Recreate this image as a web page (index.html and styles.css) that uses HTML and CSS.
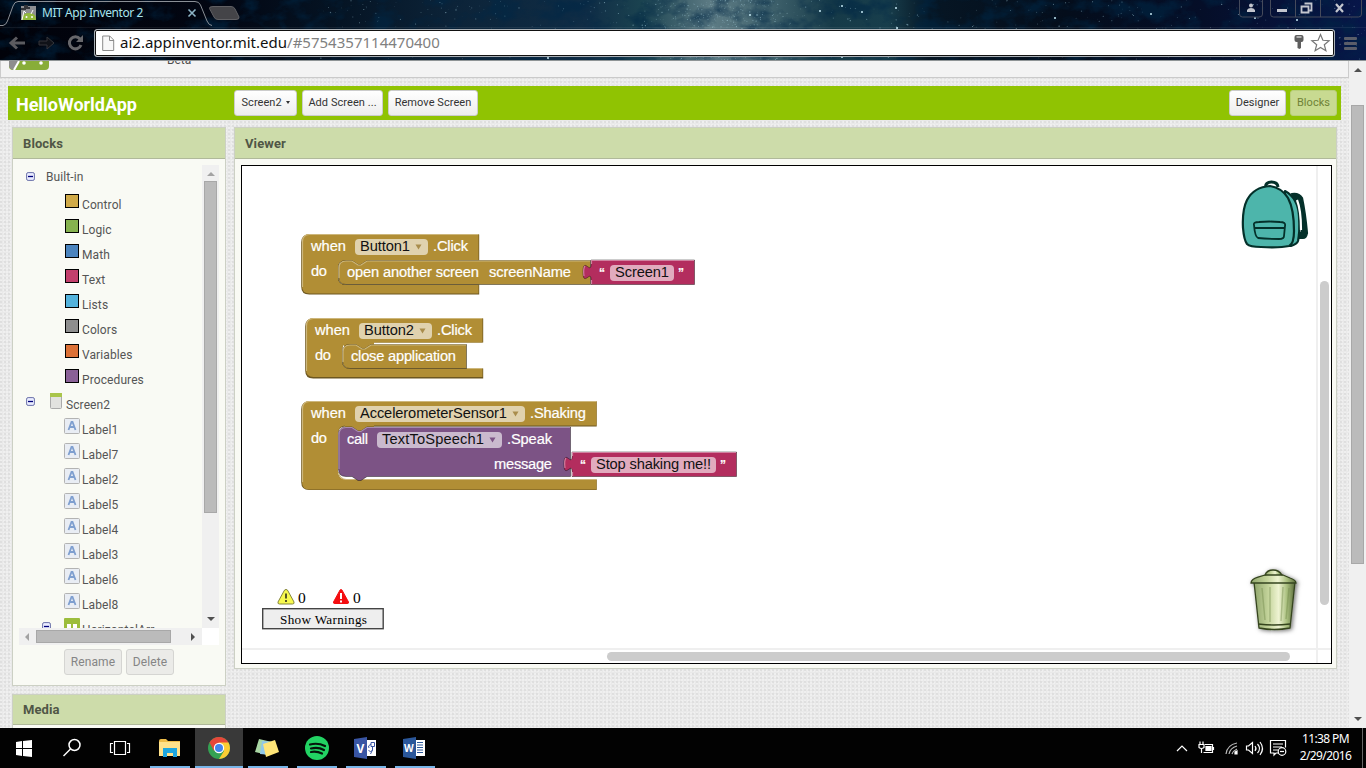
FILE: index.html
```html
<!DOCTYPE html>
<html lang="en">
<head>
<meta charset="utf-8">
<title>MIT App Inventor 2</title>
<link rel="stylesheet" href="styles.css">
</head>
<body>
<div class="desktop">
  <header class="chrome">
    <svg class="sky" id="sky" width="1366" height="60" viewBox="0 0 1366 60">
      <defs>
        <linearGradient id="night"><stop offset="0" stop-color="#01020a"/><stop offset=".16" stop-color="#020612"/><stop offset=".25" stop-color="#051424"/><stop offset=".33" stop-color="#0c2338"/><stop offset=".43" stop-color="#102d46"/><stop offset=".47" stop-color="#1b4350"/><stop offset=".52" stop-color="#5d7b84"/><stop offset=".56" stop-color="#446670"/><stop offset=".61" stop-color="#163a48"/><stop offset=".65" stop-color="#183e4c"/><stop offset=".68" stop-color="#061624"/><stop offset=".78" stop-color="#040d1b"/><stop offset=".88" stop-color="#050e28"/><stop offset="1" stop-color="#07164a"/></linearGradient>
        <filter id="cloud" x="0" y="0" width="100%" height="100%"><feTurbulence type="fractalNoise" baseFrequency=".035 .05" numOctaves="5" seed="8"/><feColorMatrix values="0 0 0 0 0  0 0 0 0 0.02  0 0 0 0 0.06  3.4 0 0 0 -1.5"/></filter>
      </defs>
      <rect width="1366" height="60" fill="url(#night)"/>
      <rect width="1366" height="60" filter="url(#cloud)" opacity=".6"/>
      <g id="stars"></g>
    </svg>
    <div class="tabs">
      <svg class="tabshape" width="240" height="27" viewBox="0 0 240 27">
        <path d="M0 25.500H3Q6 25 7.500 21L13 6Q14.500 1.500 18 1.500H195Q199 1.500 200.500 5L207 21Q209 25.500 212 25.500" fill="none" stroke="#8a8f96"/>
        <path d="M213 6.500H231Q234 6.500 235 9L239 17Q239.500 19.500 236 19.500H218Q215 19.500 214 17L209.500 8.500Q209 6.500 213 6.500Z" fill="#444448" stroke="#606064"/>
        <path d="M21 6H36V20H21Z" fill="#8e8e91"/><path d="M21 9h4v-4M27 5v3h3" stroke="#33353a" stroke-width="2" fill="none"/>
        <path d="M22 20v-2q1-5 7-5t7 5v2Z" fill="#92b93d"/><path d="m22 20 2-9 2 2M33 10l-2 4" stroke="#fff" fill="none"/><circle cx="26.500" cy="17" r="1" fill="#fff"/><circle cx="32" cy="17" r="1" fill="#fff"/>
        <path d="m188.500 9.500 7 7m0-7-7 7" stroke="#8eb5c7" stroke-width="1.600"/>
      </svg>
      <span class="tabtitle">MIT App Inventor 2</span>
      <svg class="winctl" width="126" height="19" viewBox="0 0 126 19">
        <g fill="none" stroke="#454a5b"><path d="M.500 0V14q0 3 3 3H20.500q3 0 3-3V0M31.500 0V14q0 3 3 3H119.500q3 0 3-3V0M56.500 0V17M81.500 0V17"/></g>
        <g fill="#c3c6ce"><circle cx="12" cy="5.500" r="2"/><path d="M8 12v-2q1-2 4-2t4 2v2ZM38 9h10v3H38Z"/></g>
        <path d="M65.500 3.500h7v7h-2M62.500 6.500h7v6h-7Z" fill="none" stroke="#c3c6ce" stroke-width="1.800"/><path d="m97 4 7 8m0-8-7 8" stroke="#c3c6ce" stroke-width="2.200"/>
      </svg>
    </div>
    <div class="toolbar">
      <svg class="nav" width="94" height="32" viewBox="0 0 94 32"><path d="m17 9.500-6 5.500 6 5.500M11 15h14" fill="none" stroke="#5b5b60" stroke-width="3"/><path d="M39 13h8v-4l7 6-7 6v-4h-8Z" fill="#101218" stroke="#34353a"/><path d="M80 11a6 6 0 1 0 1 6" fill="none" stroke="#67676b" stroke-width="3"/><path d="M83 7v7h-7Z" fill="#67676b"/></svg>
      <div class="url">
        <svg width="13" height="17" viewBox="0 0 13 17"><path d="M.700 1h7l4 4v10.500H.700ZM7.500 1v4.500H12" fill="#f8f8f8" stroke="#8b8b8b"/></svg>
        <span>ai2.appinventor.mit.edu<i>/#5754357114470400</i></span>
        <svg class="urlicons" width="42" height="22" viewBox="0 0 42 22"><path d="M4.500 5q0-2 2-2h5q2 0 2 2v3q0 2-2 2H11v6l-1.500 1L7.500 16V10h-1Q4.500 10 4.500 8Z" fill="#5e5e5e"/><path d="M6.500 5h5" stroke="#fff"/><path d="m30.500 2.500 2.400 5.800 6.200.4-4.800 4 1.600 6.100-5.400-3.400-5.400 3.400 1.600-6.100-4.800-4 6.200-.4Z" fill="#fff" stroke="#777" stroke-width="1.200"/></svg>
      </div>
      <div class="burger"><b></b><b></b><b></b></div>
    </div>
  </header>

  <main class="browser">
    <div class="page">
      <div class="masthead">
        <svg width="42" height="9" viewBox="0 0 42 9"><path d="M1 0h40v5q0 4-4 4H5Q1 9 1 5Z" fill="#88ad38"/><path d="M1 0h10L5 9Q1 8 1 4Z" fill="#8e8e8e"/><path d="M11 0 6 9" stroke="#fff" stroke-width="2"/><circle cx="16" cy="2" r="1.800" fill="#fff"/><circle cx="33" cy="2" r="1.800" fill="#fff"/></svg>
        <span class="beta">Beta</span>
      </div>
      <div class="greenbar">
        <h1>HelloWorldApp</h1>
        <div class="btns"><button class="w63">Screen2 <em></em></button><button class="w81">Add Screen ...</button><button class="w90">Remove Screen</button></div>
        <div class="btns right"><button class="w57">Designer</button><button class="w47 on">Blocks</button></div>
      </div>
      <div class="columns">
        <aside>
          <section class="panel blocks">
            <h2>Blocks</h2>
            <div class="scroller">
              <div class="tree" id="tree"></div>
              <div class="vbar"><u class="up dim"></u><b></b><u class="down"></u></div>
              <div class="hbar"><u class="lt dim"></u><b></b><u class="rt"></u></div>
              <div class="corner"></div>
            </div>
            <div class="actions"><button class="w58">Rename</button><button class="w48">Delete</button></div>
          </section>
          <section class="panel media"><h2>Media</h2></section>
        </aside>
        <section class="panel viewer">
          <h2>Viewer</h2>
          <svg class="canvas" viewBox="242 166 1089 497" width="1089" height="497">
            <defs>
              <linearGradient id="can"><stop offset="0" stop-color="#8fa56b"/><stop offset=".35" stop-color="#c4d49b"/><stop offset=".6" stop-color="#eef3d2"/><stop offset=".8" stop-color="#a9bf7e"/><stop offset="1" stop-color="#596b3b"/></linearGradient>
              <filter id="soft" x="-30%" y="-30%" width="160%" height="160%"><feDropShadow dx="1.500" dy="1" stdDeviation="2" flood-opacity=".55"/></filter>
            </defs>
            <path d="M1317 166V663M242 649H1331" stroke="#efefef" stroke-width="2"/>
            <rect x="1320" y="281" width="9" height="324" rx="4.500" fill="#ccc"/><rect x="607" y="652" width="683" height="9" rx="4.500" fill="#ccc"/>

            <!-- Button1.Click -->
            <path class="dk" d="M310 235H480V261H346q-7 0-7 7v9q0 8 7 8H480V295H310q-8 0-8-8V243q0-8 8-8Z"/>
            <path class="gold" d="M309.500 234H478.500V260H346q-8 0-8 8v9q0 8 8 8H478.500V293.500H309.500q-7.500 0-7.500-7.500V242q0-8 7.500-8Z"/>
            <path class="hl" d="M302.500 287V242q0-7.500 7-7.500H478"/>
            <path class="gold" d="M340 259H370V266H340Z"/>
            <path class="gold edge" d="M338.500 277V268q0-7.500 7.500-7.500h6l6 4h3l6-4H590.500V284.500H346q-7.500 0-7.500-7.500Z"/>
            <path class="hl" d="M339 278V268q0-7 7-7h6l6 4h3l6-4H590"/>
            <path class="pink edge" d="M591 260H694.500V284.500H591V279.500c0-10-8 8-8-7.500s8 2.500 8-7.500Z"/>
            <path class="hlp" d="M591.500 284V280M591.500 264V260.500H694M584 276q-1-8 1-10"/>
            <rect class="fld" x="355" y="239" width="73" height="16" rx="4"/><path class="tri" d="M415.500 244.500h6l-3 5Z"/>
            <rect class="fld" x="610" y="265" width="64" height="16" rx="4"/>
            <g class="bt"><text x="311" y="251" textLength="35">when</text><text x="433" y="251" textLength="35">.Click</text><text x="311" y="276" textLength="16">do</text><text x="347" y="277" textLength="132">open another screen</text><text x="489" y="277" textLength="82">screenName</text><text class="q" x="599" y="277">“</text><text class="q" x="678" y="277">”</text></g>
            <g class="ft"><text x="360" y="251" textLength="50">Button1</text><text x="615" y="277" textLength="54">Screen1</text></g>

            <!-- Button2.Click -->
            <path class="dk" d="M314 319H484V343H350q-7 0-7 7v11q0 8 7 8H484V379H314q-8 0-8-8V327q0-8 8-8Z"/>
            <path class="gold" d="M313.500 318H482.500V342.500H350q-8 0-8 8v10q0 8 8 8H482.500V377H313.500q-7.500 0-7.500-7.500V326q0-8 7.500-8Z"/>
            <path class="hl" d="M306.500 371V326q0-7.500 7-7.500H482M467 368.500H482"/>
            <path class="gold" d="M344 342H374V350H344Z"/>
            <path class="gold edge" d="M342.500 361V352q0-7.500 7.500-7.500h6l6 4h3l6-4H466.500V368.500H350q-7.500 0-7.500-7.500Z"/>
            <path class="hl" d="M343 362V352q0-7 7-7h6l6 4h3l6-4H466"/>
            <rect class="fld" x="359" y="323" width="73" height="16" rx="4"/><path class="tri" d="M419.500 328.500h6l-3 5Z"/>
            <g class="bt"><text x="315" y="335" textLength="35">when</text><text x="437" y="335" textLength="35">.Click</text><text x="315" y="360" textLength="16">do</text><text x="351" y="361" textLength="105">close application</text></g>
            <g class="ft"><text x="364" y="335" textLength="50">Button2</text></g>

            <!-- AccelerometerSensor1.Shaking -->
            <path class="dk" d="M310 402H597.500V427H346q-7 0-7 7v38q0 8 7 8H597.500V490.500H310q-8 0-8-8V410q0-8 8-8Z"/>
            <path class="gold" d="M309.500 401H596.500V425.500H346q-8 0-8 8v38q0 8 8 8H596.500V489.500H309.500q-7.500 0-7.500-7.500V409q0-8 7.500-8Z"/>
            <path class="hl" d="M302.500 482V409q0-7.500 7-7.500H596M345 479.500H596"/>
            <path class="gold" d="M345 425H374V434H345Z"/>
            <path d="M338 470q0 9 8 9h12V470Z" fill="#fff"/><path class="hl" d="M338.500 472q1 7.500 8 7.500h6"/>
            <path class="purple edge" d="M338.500 469V435q0-8 7.500-8h6l6 4h3l6-4H570.500V476.500H367l-6 4h-3l-6-4h-6q-7.500 0-7.500-7.500Z"/>
            <path class="hlv" d="M339 469V435q0-7.500 7-7.500h6l6 4h3l6-4H570"/>
            <path class="pink edge" d="M572 452H736.500V476.500H572V471.500c0-10-8 8-8-7.500s8 2.500 8-7.500Z"/>
            <path class="hlp" d="M572.500 476V472M572.500 456V452.500H736M565 468q-1-8 1-10"/>
            <rect class="fld" x="355" y="406" width="170" height="16" rx="4"/><path class="tri" d="M512.500 411.500h6l-3 5Z"/>
            <rect class="fld" x="377" y="432" width="125" height="16" rx="4"/><path class="tri v" d="M489.500 437.500h6l-3 5Z"/>
            <rect class="fld" x="591" y="457" width="125" height="16" rx="4"/>
            <g class="bt"><text x="311" y="418" textLength="35">when</text><text x="530" y="418" textLength="56">.Shaking</text><text x="311" y="443" textLength="16">do</text><text x="347" y="444" textLength="21">call</text><text x="507" y="444" textLength="45">.Speak</text><text x="494" y="469" textLength="58">message</text><text class="q" x="580" y="469">“</text><text class="q" x="720" y="469">”</text></g>
            <g class="ft"><text x="360" y="418" textLength="147">AccelerometerSensor1</text><text x="382" y="444" textLength="102">TextToSpeech1</text><text x="596" y="469" textLength="115">Stop shaking me!!</text></g>

            <!-- warnings -->
            <path d="M286 589.500q1.500 0 2 1.500l6 11q.5 2-1.500 2h-13q-2 0-1.500-2l6-11q.500-1.500 2-1.500Z" fill="#f7f94e" stroke="#85853a"/><path d="M286 593.500v5m0 1.500v2" stroke="#555522" stroke-width="2"/>
            <path d="M341 589.500q1 0 1.500 1.500l6 11q.500 1.500-1.500 1.500h-12q-2 0-1.500-1.500l6-11q.500-1.500 1.500-1.500Z" fill="#f40d10" stroke="#f40d10"/><path d="M341 593v6m0 1.500v2" stroke="#fff" stroke-width="2"/>
            <g class="serif"><text x="298" y="602.500" font-size="15.500">0</text><text x="353" y="602.500" font-size="15.500">0</text><rect x="262.700" y="608.700" width="120.500" height="20" fill="#eee" stroke="#444" stroke-width="1.400"/><text x="280" y="624" font-size="13.200" textLength="87">Show Warnings</text></g>

            <!-- backpack -->
            <g fill="#4db5ab" stroke="#04302a" stroke-width="2.200" stroke-linejoin="round">
              <path d="M1265.500 187q0-5 6-5t6.500 5" fill="none" stroke-width="3"/>
              <path d="M1285 191q13 7 14 25 1 17-1 25-1 3-7 5h-8Z"/>
              <path d="M1292 194q7-1 10 4 3 14 5 35-1 5-4 5h-4v-4l3-2q0-19-6-32Z" fill="#04302a"/><path d="M1297 200q4 10 4 30" fill="none" stroke="#fff" stroke-width="2.200"/>
              <path d="M1270 186q-16 1-23 14-5 10-4 28 1 12 4 16 3 3 14 3 19 1 28-1 5-2 5-15 0-22-6-33-6-10-18-12Z"/>
              <path d="M1254 225q-1-3 5-3 10-1 21 0 6 0 5 4l-1 10q0 3-5 3-13 0-21-1-3-1-4-13Zm0 3h31" stroke-width="1.800"/>
            </g>
            <!-- trash can -->
            <g stroke="#35441f" stroke-width="1.300" fill="url(#can)" filter="url(#soft)"><path d="M1254 582h41l-5 46q-16 3-31 0Z"/><path d="M1251 583q0-4 7-6l7-2q8-3 18 0l7 3q6 2 6 5Z"/><path d="M1265 575q2-5 8-5t9 5Z"/><path d="M1258 624q16 2 32 0" fill="none"/></g>
            <path d="M1262 588l3 32m5-33v35m13-35-2 34m8-33-3 31" stroke="#6f8748" stroke-width="1.500" opacity=".4"/>
          </svg>
        </section>
      </div>
    </div>
    <div class="pagebar"><u class="up"></u><b></b><u class="down"></u></div>
  </main>

  <footer class="taskbar">
    <div class="app"><svg viewBox="0 0 48 40"><path d="m16 14 6-1v7h-6Zm7-1 9-1v8h-9ZM16 21h6v7l-6-1Zm7 0h9v8l-9-1Z" fill="#fff"/></svg></div>
    <div class="app"><svg viewBox="0 0 48 40"><g fill="none" stroke="#fff" stroke-width="1.500"><circle cx="26.500" cy="17" r="5.500"/><path d="m22.500 21-7 7"/></g></svg></div>
    <div class="app"><svg viewBox="0 0 48 40"><path d="M18.500 13.500h11v13h-11ZM17 15.500h-2.500v9H17M31 15.500h2.500v9H31" fill="none" stroke="#fff" stroke-width="1.200"/></svg></div>
    <div class="app run"><svg viewBox="0 0 48 40"><path d="M15 13q0-2 2-2h5l2 2h12v15H15Z" fill="#efbd48"/><path d="M15 14h21v14H15Z" fill="#ffe28a"/><path d="M19 20h14v9h-4v-4h-6v4h-4Z" fill="#1ea7df"/></svg></div>
    <div class="app run active"><svg viewBox="0 0 48 40"><circle cx="24" cy="20" r="11" fill="#34a153"/><path d="M24 20 14.500 14.500A11 11 0 0 1 33.500 14.500Z" fill="#e6473a"/><path d="M24 14.500H33.500A11 11 0 0 1 24 31L29 23Z" fill="#fbcd34"/><path d="M14.500 14.500 19 23l4-8Z" fill="#e6473a"/><circle cx="24" cy="20" r="5.200" fill="#fff"/><circle cx="24" cy="20" r="4" fill="#4385ee"/></svg></div>
    <div class="app run"><svg viewBox="0 0 48 40"><path d="m16 11 13 3-4 13-13-3Z" fill="#a9d7a4"/><path d="m19 13 11 1-2 13-11-1Z" fill="#91c8e9"/><path d="m20 16 12-4 4 12-13 5Z" fill="#ffe577"/></svg></div>
    <div class="app run"><svg viewBox="0 0 48 40"><circle cx="25" cy="20" r="12" fill="#22d363"/><path d="M18 16.500q8-2 15 1.500M19 20.500q7-2 13 1.500M19 24q6-1 11 1.500" fill="none" stroke="#05150b" stroke-width="2.200" stroke-linecap="round"/></svg></div>
    <div class="app run"><svg viewBox="0 0 48 40"><path d="M25 12h10v16H25Z" fill="#fff"/><path d="M30 14.500h3.500v4H30ZM30 16q-4 2-2 4M31.500 19v3l-2 2-2-2M31.500 22l-2 4" fill="none" stroke="#3955a3"/><path d="m13 11 13-2v22l-13-2Z" fill="#3955a3"/><text x="15.500" y="24.500" font-size="12" font-weight="bold" fill="#fff">V</text></svg></div>
    <div class="app run"><svg viewBox="0 0 48 40"><path d="M25 12h10v16H25Z" fill="#fff"/><path d="M27 14.500h6m-6 2.500h6m-6 2.500h6m-6 2.500h6m-6 2.500h6" stroke="#2b579a"/><path d="m13 11 13-2v22l-13-2Z" fill="#2b579a"/><text x="14" y="23.500" font-size="10" font-weight="bold" fill="#fff">W</text></svg></div>
    <div class="tray">
      <svg width="116" height="40" viewBox="1174 728 116 40" fill="none" stroke="#fff" stroke-width="1.200">
        <path d="m1178 751 5-5 5 5"/>
        <path d="M1206 744.500h7.500v8h-9M1214.500 747v3M1201 741.500v3m3-3v3M1200 744.500h5v3q-2.500 2-5 0ZM1202.500 748.500v4.500"/><path d="M1207 746.500h5v4h-5Z" fill="#fff"/>
        <path d="M1227 754q1-9 11-11M1230 754q1-6 8-8M1233 754q1-3 5-5" stroke="#bbb"/><path d="M1236 754v-2l2-1v3Z" fill="#fff"/>
        <path d="M1247.500 746h2l4-3.500v11l-4-3.500h-2ZM1256 746q2 2.500 0 5M1258.500 744q4 4.500 0 9M1261 742q5 6.500 0 13"/>
        <path d="M1280 753h-3l-2 2v-2h-3.500v-12.500h15v7M1274 744h10m-10 3h9m-9 3h5"/><circle cx="1283" cy="751.500" r="3.800"/><path d="M1281 751.500h4"/>
      </svg>
      <div class="clock"><span>11:38 PM</span><span>2/29/2016</span></div>
      <div class="peek"></div>
    </div>
  </footer>
</div>
<script src="app.js"></script>
</body>
</html>
```
FILE: styles.css
```css
* { box-sizing: border-box; }
body { margin: 0; font-family: Roboto, "Noto Sans", sans-serif; color: #4d4d4d; overflow: hidden; }
h1, h2 { margin: 0; }
svg { display: block; flex: none; }
.desktop { width: 1366px; height: 768px; display: flex; flex-direction: column; overflow: hidden; }

.chrome { height: 61px; position: relative; border-bottom: 1px solid #8f9496; background: #020612; overflow: hidden; }
.sky { position: absolute; left: 0; top: 0; }
.tabs { position: relative; display: flex; height: 27px; }
.tabshape { margin-right: -240px; }
.tabtitle { padding-left: 42px; font: 12px/25px "Noto Sans", sans-serif; letter-spacing: -.42px; color: #a8e4ee; flex: 1; }
.winctl { margin-right: 1px; }
.toolbar { position: relative; display: flex; height: 33px; border-top: 1px solid #ffffff12; }
.nav { height: 32px; }
.url { width: 1241px; height: 28px; margin-top: 1px; background: #fff; border: 1px solid #a9afb4; box-shadow: inset 0 0 0 1px #111; border-radius: 3px; display: flex; align-items: center; padding-left: 7px; color: #111; font: 15px/24px "Noto Sans", sans-serif; letter-spacing: .01px; }
.url span { padding: 0 0 2px 5px; flex: 1; }
.url i { font-style: normal; color: #808080; }
.urlicons { margin-right: 2px; }
.burger { padding: 9px 0 0 9px; }
.burger b { display: block; width: 13px; height: 3px; margin-bottom: 2px; background: #5a5d69; border-radius: 1px; }

.browser { height: 667px; display: flex; }
.page { width: 1349px; height: 667px; overflow: hidden; background-color: #e9e9e9; background-image: radial-gradient(circle at 1px 1px, #dfdfdf .7px, transparent 1px), radial-gradient(circle at 1px 1px, #f0f0f0 .7px, transparent 1px); background-size: 4px 4px, 3px 3px; }
.masthead { height: 17px; background: #f3f3f3; border-bottom: 1px solid #cacaca; border-left: 1px solid #ccc; border-right: 1px solid #ccc; display: flex; padding-left: 7px; overflow: hidden; }
.beta { margin: -8px 0 0 117px; font-size: 12px; line-height: 14px; }
.greenbar { display: flex; align-items: center; width: 1333px; height: 34px; margin: 8px 0 0 8px; background: #90c302; padding: 0 4px 0 8px; }
h1 { width: 218px; font-size: 18px; font-weight: 700; line-height: 34px; padding-top: 3px; color: #fff; letter-spacing: -.03px; }
.btns { display: flex; gap: 5px; margin-top: -1px; }
.right { margin-left: auto; gap: 4px; }
button { height: 26px; padding: 0; border: 1px solid #ccc; border-radius: 3px; background: linear-gradient(#fff, #ededed); color: #333; font: 11px Roboto, sans-serif; letter-spacing: .06px; white-space: nowrap; }
button em { display: inline-block; border: 2px solid transparent; border-top: 3px solid #333; border-bottom: 0; vertical-align: 2px; margin-left: 1px; }
.w63 { width: 63px; } .w81 { width: 81px; } .w90 { width: 90px; } .w57 { width: 57px; } .w47 { width: 47px; } .w58 { width: 58px; } .w48 { width: 48px; }
.on { background: #c8da91; border-color: #b9cf7c; color: #6f8237; }

.columns { display: flex; align-items: flex-start; gap: 8px; padding: 7px 0 0 12px; }
aside { width: 214px; }
.panel { border: 1px solid #ccd0c4; background: #f9faf4; }
h2 { height: 31px; background: #cddcaa; border-bottom: 1px solid #b0b99a; font-size: 13px; font-weight: 700; line-height: 31px; padding-left: 10px; color: #505646; letter-spacing: .1px; }
.blocks { height: 559px; }
.media { height: 60px; margin-top: 8px; }
.media h2 { height: 30px; line-height: 29px; }
.viewer { width: 1103px; height: 542px; }
.canvas { border: 1px solid #000; box-sizing: content-box; background: #fff; margin: 6px 0 0 6px; }

.scroller { display: grid; grid-template: 463px 17px / 183px 17px; margin: 6px 0 0 6px; }
.tree { overflow: hidden; height: 463px; }
.row { display: flex; height: 25px; font-size: 12px; letter-spacing: .1px; line-height: 27px; color: #555; }
.row.root { height: 27px; }
.row .minus { margin-top: 5px; }
.row .ico { margin-top: 1px; }
.sw { width: 14px; height: 14px; margin: 2px 3px 0 46px; border: 1px solid #000; flex: none; }
.row.root .minus { margin-top: 7px; }
.row.root { line-height: 24px; }

.vbar, .hbar, .pagebar { background: #f0f0f0; display: flex; align-items: center; }
.vbar, .pagebar { flex-direction: column; }
.vbar b { width: 13px; height: 332px; margin-top: -1px; background: #bbb; border: 1px solid #a8a8a8; }
.hbar b { width: 135px; height: 13px; background: #bbb; border: 1px solid #a8a8a8; }
.corner { background: #fff; }
u { display: block; width: 0; height: 0; border: 4px solid transparent; }
.up { border-top: 0; border-bottom-color: #505050; margin: 7px 0 6px; }
.down { border-bottom: 0; border-top-color: #505050; margin: auto 0 7px; }
.lt { border-left: 0; border-right-color: #505050; margin: 0 7px 0 6px; }
.rt { border-right: 0; border-left-color: #505050; margin: 0 7px 0 auto; }
.up.dim { border-bottom-color: #a3a3a3; } .lt.dim { border-right-color: #a3a3a3; }
.pagebar { width: 17px; }
.pagebar b { width: 13px; height: 459px; margin-top: 27px; background: #bbb; border: 1px solid #a8a8a8; }
.actions { display: flex; gap: 4px; padding: 4px 0 0 51px; }
.actions button { background: #ebebe8; border-color: #d5d5d2; color: #858585; font-size: 12px; letter-spacing: .1px; }

.bt, .ft { font: 14.67px "Liberation Sans", Arial, sans-serif; fill: #fff; }
.bt { stroke: #fff; stroke-width: .2px; }
.ft { fill: #111; }
.q { font: bold 12px "Liberation Sans", sans-serif; }
.serif { font-family: "Liberation Serif", serif; fill: #000; }
.gold { fill: #b18e35; } .pink { fill: #b32d5e; } .purple { fill: #7c5385; }
.dk { fill: #6d5720; transform: translate(-.8px, -.6px); }
.edge { stroke: #0006; stroke-width: 1px; }
.hl, .hlp, .hlv { fill: none; stroke: #cdb77c; stroke-width: 1.2px; }
.hlp { stroke: #d082a0; } .hlv { stroke: #a88caf; }
.fld { fill: #fff; opacity: .6; }
.tri { fill: #a98d4c; } .tri.v { fill: #7c5385; }

.taskbar { height: 40px; background: #020202; display: flex; color: #fff; }
.app { width: 48px; height: 40px; position: relative; }
.app svg { width: 48px; height: 40px; font-family: "Open Sans", sans-serif; }
.app.run { width: 49px; }
.app.run::after { content: ""; position: absolute; left: 5px; bottom: 0; width: 40px; height: 2px; background: #78b5e8; }
.app:nth-child(4)::after { left: 6px !important; }
.app.active { background: #393939; margin: 0 0 0 2px; width: 48px; }
.app.active::after { left: 0 !important; width: 48px !important; }
.tray { margin-left: auto; display: flex; }
.clock { width: 71px; padding: 2px 2px 0 0; font: 12px/17px "Noto Sans", sans-serif; letter-spacing: -.6px; display: flex; flex-direction: column; align-items: center; margin-left: 2px; }
.peek { width: 4px; border-left: 1px solid #666; }
```
FILE: app.js
```js
// Tree of block drawers and components
const minus = '<svg class="minus" width="9" height="9" viewBox="0 0 9 9"><rect x=".6" y=".6" width="7.800" height="7.800" rx="1.500" fill="#e9ecff" stroke="#6a70a8"/><path d="M2 4.500h5" stroke="#00007a" stroke-width="1.300"/></svg>';
const label = '<svg class="ico" width="16" height="16" viewBox="0 0 16 16" style="margin-left:45px;margin-right:2px"><rect x=".5" y=".5" width="15" height="15" rx="1" fill="#e9edf4" stroke="#b3b3b3"/><path d="M4.500 12 7.500 4h1l3 8M5.500 9h5" fill="none" stroke="#7f9fcf" stroke-width="1.800"/></svg>';
const drawers = [['Control', '#d0aa48'], ['Logic', '#86b24f'], ['Math', '#4b84be'], ['Text', '#c33f6c'], ['Lists', '#54b3dc'], ['Colors', '#8e8e8e'], ['Variables', '#dc7136'], ['Procedures', '#8a6197']];
let html = `<div class="row root"><span style="padding-left:7px">${minus}</span><span style="padding-left:11px">Built-in</span></div>`;
for (const [name, color] of drawers) html += `<div class="row"><span class="sw" style="background:${color}"></span>${name}</div>`;
html += `<div class="row"><span style="padding-left:7px">${minus}</span><svg class="ico" width="12" height="16" viewBox="0 0 12 16" style="margin-left:15px;margin-right:4px"><rect x=".5" y=".5" width="11" height="15" rx="1" fill="#e2e2df" stroke="#aaa"/><path d="M0 0h12v4H0Z" fill="#a9c54a"/></svg>Screen2</div>`;
for (const n of [1, 7, 2, 5, 4, 3, 6, 8]) html += `<div class="row">${label}Label${n}</div>`;
html += `<div class="row"><span style="padding-left:23px">${minus}</span><svg class="ico" width="16" height="16" viewBox="0 0 16 16" style="margin-left:13px;margin-right:2px"><rect width="16" height="16" rx="1" fill="#9cbd3c"/><path d="M3 6h4v8H3Zm6 0h4v8H9Z" fill="#fff"/></svg>HorizontalArr</div>`;
document.getElementById('tree').innerHTML = html;

// Stars with a fixed seed
let seed = 41;
const rnd = () => (seed = seed * 16807 % 2147483647) / 2147483647;
let stars = '';
for (let i = 0; i < 1100; i++) {
  const core = rnd() < 0.45;
  const x = core ? 640 + (rnd() + rnd()) * 80 : 320 + rnd() * 1046;
  stars += `<circle cx="${x.toFixed(1)}" cy="${(rnd() * 60).toFixed(1)}" r="${(0.25 + rnd() * 0.4).toFixed(2)}" fill="#a9d2e0" opacity="${(0.15 + rnd() * 0.5).toFixed(2)}"/>`;
}
for (const [x, y] of [[862, 12], [896, 8], [820, 11], [842, 6], [750, 15], [1055, 18], [1151, 14], [1255, 18], [548, 58], [842, 57], [897, 28], [1297, 20]])
  stars += `<circle cx="${x}" cy="${y}" r="1" fill="#c4e9f5"/>`;
document.getElementById('stars').innerHTML = stars;
```
